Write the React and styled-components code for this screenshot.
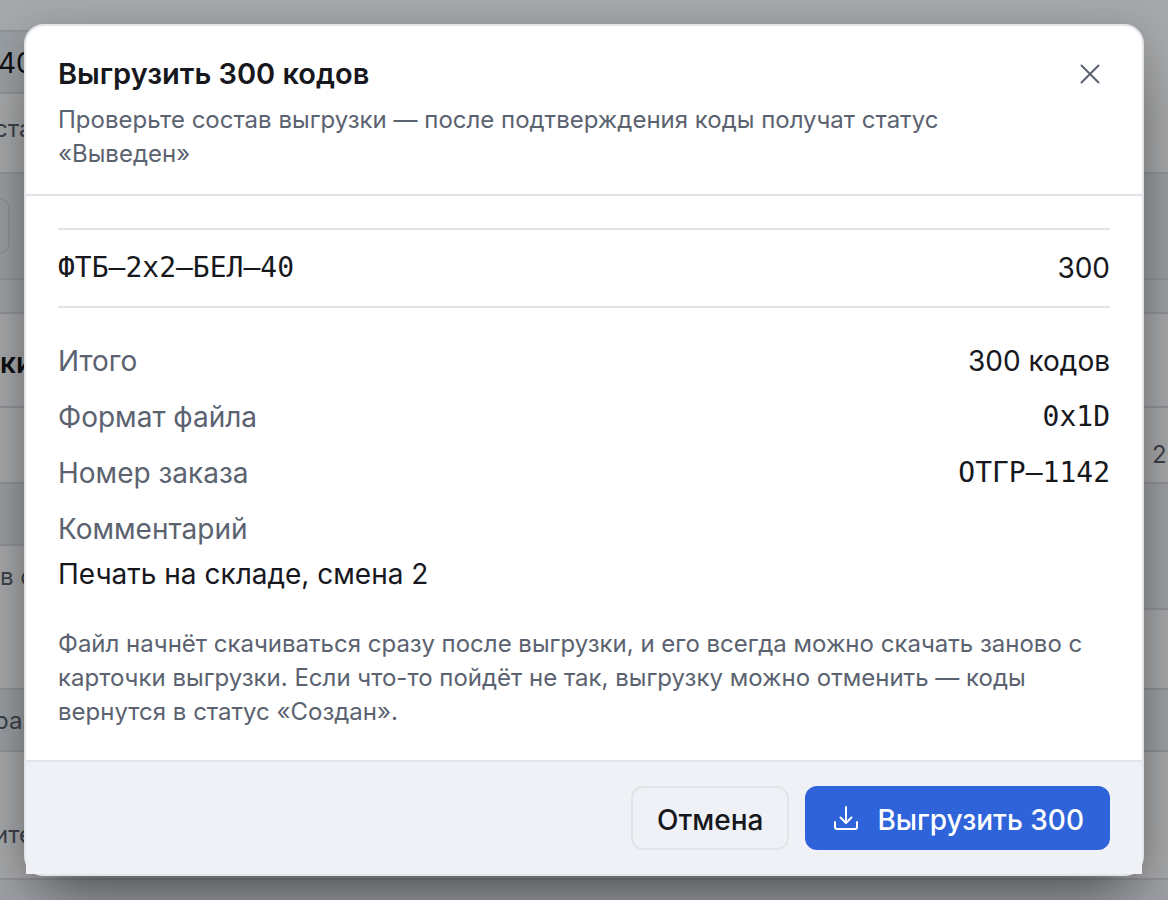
import React from 'react'
import styled, { createGlobalStyle } from 'styled-components'

const leftRows = [
    { height: 32, tone: 'plain' },
    { height: 62, tone: 'cool', text: '40', size: 28, dark: true, top: 14, cut: 2 },
    { height: 80, tone: 'plain', text: 'ста', size: 24, top: 18, cut: 6 },
    { height: 106, tone: 'cool', field: true, top: 24 },
    { height: 34, tone: 'page' },
    { height: 94, tone: 'plain', text: 'ки', size: 28, dark: true, bold: true, top: 32 },
    { height: 76, tone: 'plain' },
    { height: 62, tone: 'cool' },
    { height: 144, tone: 'plain', text: 'в с', size: 24, top: 14 },
    { height: 62, tone: 'cool', text: 'раз', size: 24, top: 14, cut: 6 },
    { height: 128, tone: 'plain', text: 'ите', size: 24, top: 66, cut: 6 },
    { height: 40, tone: 'page' },
]

const rightRows = [
    { height: 174, tone: 'plain' },
    { height: 106, tone: 'cool' },
    { height: 34, tone: 'page' },
    { height: 94, tone: 'plain' },
    { height: 76, tone: 'plain', text: '25', size: 24, top: 30 },
    { height: 126, tone: 'page' },
    { height: 80, tone: 'plain' },
    { height: 62, tone: 'page' },
    { height: 128, tone: 'plain' },
    { height: 40, tone: 'page' },
]

function App() {
    return (
        <>
            <GlobalStyle />
            <Screen>
                <Behind aria-hidden="true">
                    <Side>
                        {leftRows.map((row, i) => (
                            <BackRow key={i} $row={row}>
                                {row.field ? <BackField /> : row.text}
                            </BackRow>
                        ))}
                    </Side>
                    <Side $right>
                        {rightRows.map((row, i) => (
                            <BackRow key={i} $row={row}>{row.text}</BackRow>
                        ))}
                    </Side>
                </Behind>
                <Overlay>
                    <Modal role="dialog" aria-modal="true" aria-labelledby="title">
                        <Header>
                            <div>
                                <Title id="title">Выгрузить 300 кодов</Title>
                                <Subtitle>
                                    Проверьте состав выгрузки — после подтверждения коды получат статус «Выведен»
                                </Subtitle>
                            </div>
                            <CloseButton aria-label="Закрыть">
                                <svg width="20" height="20" viewBox="0 0 20 20" fill="none" stroke="currentColor" strokeWidth="2">
                                    <path d="M1.5 1.5 18.5 18.5M18.5 1.5 1.5 18.5" strokeLinecap="round" />
                                </svg>
                            </CloseButton>
                        </Header>

                        <Body>
                            <Codes>
                                <tbody>
                                    <tr>
                                        <th scope="row">ФТБ–2x2–БЕЛ–40</th>
                                        <td>300</td>
                                    </tr>
                                </tbody>
                            </Codes>
                            <Details>
                                <Detail>
                                    <dt>Итого</dt>
                                    <Value>300 кодов</Value>
                                </Detail>
                                <Detail>
                                    <dt>Формат файла</dt>
                                    <Value $mono>0x1D</Value>
                                </Detail>
                                <Detail>
                                    <dt>Номер заказа</dt>
                                    <Value $mono>ОТГР–1142</Value>
                                </Detail>
                                <Detail $stacked>
                                    <dt>Комментарий</dt>
                                    <Value>Печать на складе, смена 2</Value>
                                </Detail>
                            </Details>
                            <Note>
                                Файл начнёт скачиваться сразу после выгрузки, и его всегда можно скачать заново с карточки выгрузки. Если что-то пойдёт не так, выгрузку можно отменить — коды вернутся в статус «Создан».
                            </Note>
                        </Body>

                        <Footer>
                            <Button>Отмена</Button>
                            <Button $primary>
                                <svg width="28" height="28" viewBox="0 0 28 28" fill="none" stroke="currentColor" strokeWidth="2" strokeLinecap="round" strokeLinejoin="round">
                                    <path d="M15 1v16M9.500 11.500l5.500 5.500 5.500-5.500M4 16v5q0 2 2 2h18q2 0 2-2v-5" />
                                </svg>
                                Выгрузить 300
                            </Button>
                        </Footer>
                    </Modal>
                </Overlay>
            </Screen>
        </>
    )
}
export default App;


const tones = {
    plain: '#ffffff',
    cool: '#eaf0f5',
    page: '#f2f3f9',
}

const mono = '"DejaVu Sans Mono", monospace'

const GlobalStyle = createGlobalStyle`
*{
    box-sizing:border-box;
}
body{
    margin:0;
    font-family:Inter, "Liberation Sans", sans-serif;
    color:#16181d;
}
`

const Screen = styled.div`
display:grid;
min-height:100vh;
overflow:hidden;
background:#ffffff;
`

const Behind = styled.div`
grid-area:1 / 1;
display:flex;
height:100vh;
overflow:hidden;
`

const Side = styled.div`
flex:${p => p.$right ? '0 0 40px' : '1'};
padding-left:${p => p.$right ? '24px' : '0'};
min-width:0;
background:#ffffff;
${p => p.$right && `
    ${BackRow}{
        margin-left:-24px;
        padding-left:24px;
    }
`}
`

const BackRow = styled.div`
height:${p => p.$row.height}px;
padding-top:${p => p.$row.top || 0}px;
border-bottom:2px solid #dddfe7;
background:${p => tones[p.$row.tone]};
color:${p => p.$row.dark ? '#16181d' : '#5b6270'};
font-size:${p => p.$row.size}px;
font-weight:${p => p.$row.bold ? 600 : 400};
line-height:34px;
text-indent:-${p => p.$row.cut || 0}px;
white-space:nowrap;
`

const BackField = styled.div`
width:10px;
height:56px;
border:2px solid #dddfe7;
border-left:0;
border-radius:0 10px 10px 0;
`

const Overlay = styled.div`
grid-area:1 / 1;
z-index:1;
display:flex;
align-items:center;
padding:24px;
background:rgba(4, 6, 10, 0.35);
`

const Modal = styled.section`
flex:1;
border:2px solid #e1e4e9;
border-radius:20px;
background:#ffffff;
box-shadow:0 32px 64px -16px rgba(0, 0, 0, 0.5), 0 0 32px rgba(0, 0, 0, 0.1);
`

const Header = styled.header`
display:flex;
justify-content:space-between;
align-items:flex-start;
gap:64px;
padding:28px 32px 23px;
border-bottom:2px solid #e1e4e9;
`

const Title = styled.h1`
margin:0 0 9px;
font-size:29px;
line-height:40px;
font-weight:600;
`

const Subtitle = styled.p`
margin:0;
font-size:24px;
line-height:34px;
color:#5b6270;
`

const CloseButton = styled.button`
display:flex;
align-items:center;
justify-content:center;
flex-shrink:0;
width:40px;
height:40px;
padding:0;
border:0;
background:none;
color:#5b6270;
`

const Body = styled.div`
padding:32px 32px 31px;
font-size:28px;
line-height:42px;
`

const Codes = styled.table`
width:100%;
height:80px;
border-collapse:collapse;
border-top:2px solid #e1e4e9;
border-bottom:2px solid #e1e4e9;
th{
    padding:0;
    text-align:left;
    font-family:${mono};
    font-weight:400;
}
td{
    padding:0;
    text-align:right;
}
`

const Details = styled.dl`
display:flex;
flex-direction:column;
gap:14px;
margin:32px 0;
`

const Detail = styled.div`
display:flex;
flex-direction:${p => p.$stacked ? 'column' : 'row'};
justify-content:space-between;
gap:${p => p.$stacked ? '3px' : '32px'};
dt{
    color:#5b6270;
}
`

const Value = styled.dd`
margin:0;
font-family:${p => p.$mono ? mono : 'inherit'};
`

const Note = styled.p`
margin:0;
font-size:24px;
line-height:34px;
color:#5b6270;
`

const Footer = styled.footer`
display:flex;
justify-content:flex-end;
gap:16px;
padding:24px 32px;
border-top:2px solid #e1e4e9;
background:#f0f1f6;
`

const Button = styled.button`
display:flex;
align-items:center;
gap:18px;
height:64px;
padding:3px 24px 0;
border:2px solid ${p => p.$primary ? '#2f63da' : '#e1e4e9'};
border-radius:12px;
background:${p => p.$primary ? '#2f63da' : 'transparent'};
color:${p => p.$primary ? '#ffffff' : '#16181d'};
font-family:inherit;
font-size:28px;
font-weight:500;
`
